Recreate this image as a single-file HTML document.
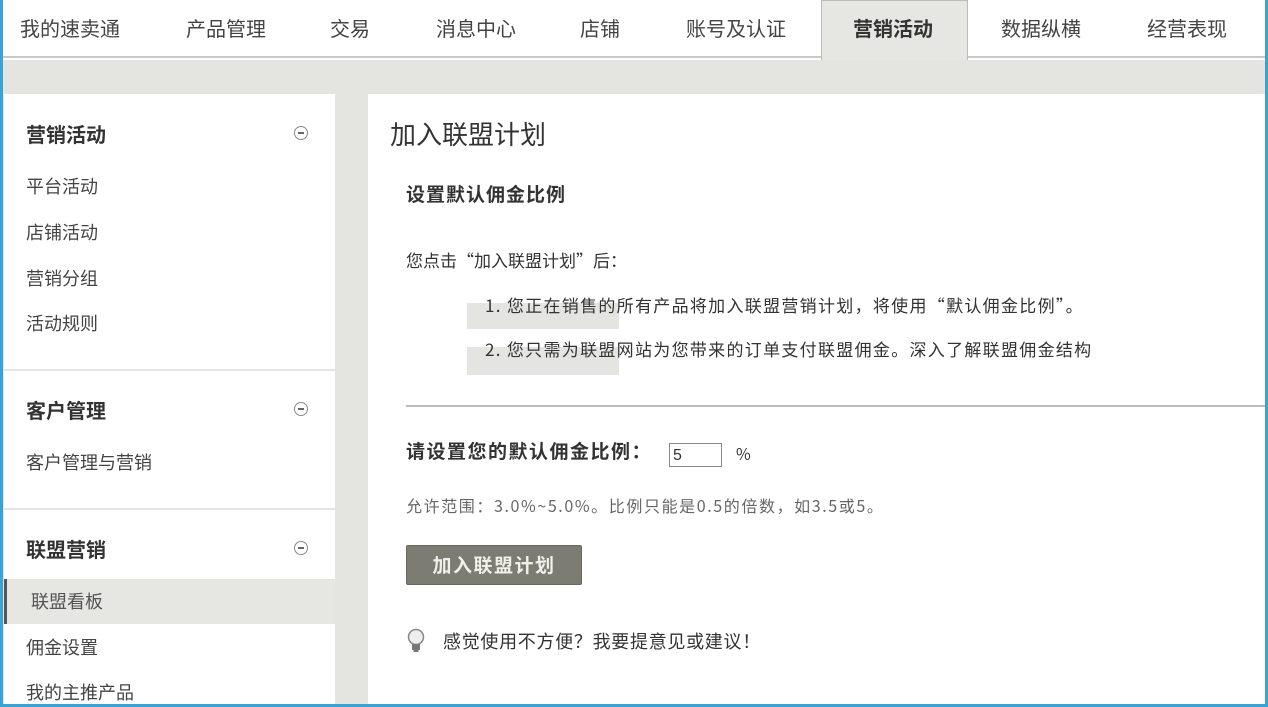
<!DOCTYPE html>
<html><head><meta charset="utf-8"><style>
*{margin:0;padding:0;box-sizing:border-box}
body{width:1268px;height:707px;overflow:hidden;background:#fff;font-family:"Noto Sans CJK SC","Liberation Sans",sans-serif;color:#333;position:relative}
.a{position:absolute;white-space:nowrap;line-height:1.2}
.nav{position:absolute;left:0;top:0;width:1268px;height:58px;background:#fff;border-bottom:2px solid #c8c8c4}
.nav span{position:absolute;top:16px;font-size:20px;line-height:1.2;color:#444;transform:translateX(-50%)}
.tab{position:absolute;left:821px;top:0;width:147px;height:60px;background:#e6e6e2;border:1px solid #bdbdb8;border-bottom:none}
.gray{position:absolute;left:0;top:60px;width:1268px;height:647px;background:#e4e4e0}
.lp{position:absolute;left:4px;top:94px;width:331px;height:613px;background:#fff}
.rp{position:absolute;left:368px;top:94px;width:897px;height:613px;background:#fff}
.h{font-size:20px;font-weight:bold;color:#333}
.it{font-size:18px;color:#444}
.sep{position:absolute;left:4px;width:331px;height:2px;background:#e4e4e0}
.min{position:absolute;left:294px;width:14px;height:14px;border:1px solid #888;border-radius:50%}
.min:after{content:"";position:absolute;left:3px;top:5px;width:6px;height:2px;background:#666}
.bl{position:absolute;background:#3ba3d4}
</style></head><body>
<div class="gray"></div>
<div class="nav">
<div class="tab"></div>
<span style="left:70px">我的速卖通</span>
<span style="left:226px">产品管理</span>
<span style="left:350px">交易</span>
<span style="left:476px">消息中心</span>
<span style="left:600px">店铺</span>
<span style="left:736px">账号及认证</span>
<span style="left:893px;font-weight:bold;color:#333">营销活动</span>
<span style="left:1041px">数据纵横</span>
<span style="left:1187px">经营表现</span>
</div>
<div class="lp"></div>
<div class="rp"></div>
<div class="a h" style="left:26px;top:122px">营销活动</div><div class="min" style="top:126px"></div>
<div class="a it" style="left:26px;top:176px">平台活动</div>
<div class="a it" style="left:26px;top:222px">店铺活动</div>
<div class="a it" style="left:26px;top:268px">营销分组</div>
<div class="a it" style="left:26px;top:313px">活动规则</div>
<div class="sep" style="top:369px"></div>
<div class="a h" style="left:26px;top:398px">客户管理</div><div class="min" style="top:402px"></div>
<div class="a it" style="left:26px;top:452px">客户管理与营销</div>
<div class="sep" style="top:508px"></div>
<div class="a h" style="left:26px;top:537px">联盟营销</div><div class="min" style="top:541px"></div>
<div class="a" style="left:4px;top:579px;width:331px;height:45px;background:#e6e6e2;border-left:3px solid #555"></div>
<div class="a it" style="left:31px;top:591px;color:#555">联盟看板</div>
<div class="a it" style="left:26px;top:637px">佣金设置</div>
<div class="a it" style="left:26px;top:682px">我的主推产品</div>

<div class="a" style="left:390px;top:118px;font-size:26px;color:#333">加入联盟计划</div>
<div class="a" style="left:406px;top:183px;font-size:19px;font-weight:bold;color:#333;letter-spacing:1px">设置默认佣金比例</div>
<div class="a" style="left:406px;top:250px;font-size:17px;color:#333">您点击“加入联盟计划”后：</div>
<div class="a" style="left:467px;top:303px;width:152px;height:26px;background:#e4e4e0"></div>
<div class="a" style="left:467px;top:347px;width:152px;height:28px;background:#e4e4e0"></div>
<div class="a" style="left:485px;top:295px;font-size:17px;color:#333;letter-spacing:1.3px">1. 您正在销售的所有产品将加入联盟营销计划，将使用“默认佣金比例”。</div>
<div class="a" style="left:485px;top:339px;font-size:17px;color:#333;letter-spacing:1.3px">2. 您只需为联盟网站为您带来的订单支付联盟佣金。深入了解联盟佣金结构</div>
<div class="a" style="left:406px;top:405px;width:859px;height:2px;background:#bbb"></div>
<div class="a" style="left:406px;top:440px;font-size:19px;font-weight:bold;color:#333;letter-spacing:1.5px">请设置您的默认佣金比例：</div>
<div class="a" style="left:669px;top:443px;width:53px;height:24px;border:1px solid #888;font-size:16px;padding:2px 0 0 3px;font-family:'Liberation Sans',sans-serif">5</div>
<div class="a" style="left:736px;top:444px;font-size:16px">%</div>
<div class="a" style="left:406px;top:496px;font-size:16px;color:#666;letter-spacing:1.6px">允许范围：3.0%~5.0%。比例只能是0.5的倍数，如3.5或5。</div>
<div class="a" style="left:406px;top:545px;width:176px;height:40px;background:#7d7c72;border-radius:2px;border:1px solid #6a695f;color:#f0f0ea;font-size:19px;font-weight:bold;text-align:center;line-height:38px;letter-spacing:1.5px">加入联盟计划</div>
<svg class="a" style="left:406px;top:628px" width="20" height="26" viewBox="0 0 20 26"><circle cx="10" cy="9" r="7.5" fill="#eee" stroke="#888" stroke-width="1.5"/><rect x="6" y="16" width="8" height="6" fill="#777"/><rect x="7.5" y="22" width="5" height="2" fill="#777"/></svg>
<div class="a" style="left:443px;top:631px;font-size:18px;color:#333;letter-spacing:0.7px">感觉使用不方便？我要提意见或建议！</div>

<div class="bl" style="left:0;top:0;width:3px;height:707px"></div>
<div class="bl" style="left:1265px;top:0;width:3px;height:707px"></div>
<div class="bl" style="left:0;top:704px;width:1268px;height:3px"></div>
</body></html>
